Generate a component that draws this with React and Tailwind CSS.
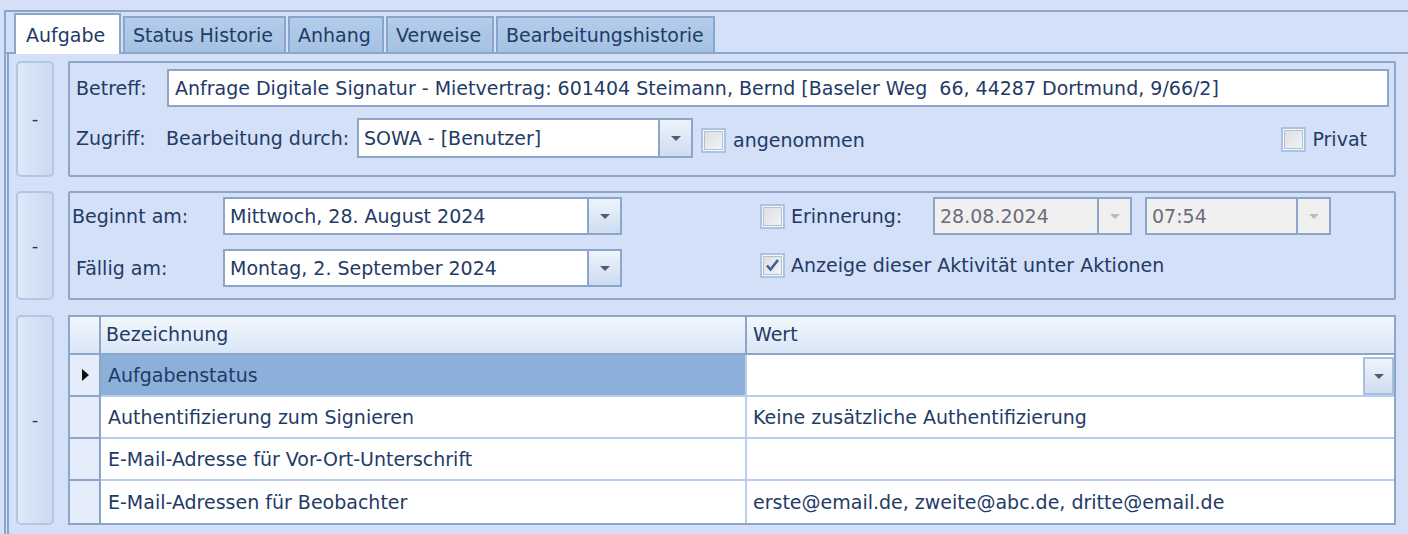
import { useState } from "react";

const line = "border-[#8ba6c9]";
const txt = "text-[#1f3b66]";

const Arrow = ({ disabled }) => (
    <svg width="12" height="7" viewBox="0 0 12 7">
        <path d="M1 1h10L6 6z" fill={disabled ? "#b4bcc8" : "#4f5e74"} />
    </svg>
);

const DropButton = ({ disabled }) => (
    <div
        className={`w-[33px] h-full flex items-center justify-center border-l-2 ${line} ${
            disabled ? "bg-[#f0f0f0]" : "bg-gradient-to-b from-[#eef4fc] to-[#cddcf0]"
        }`}
    >
        <Arrow disabled={disabled} />
    </div>
);

const Combo = ({ value, width, disabled, height = "h-[38px]" }) => (
    <div
        className={`${width} ${height} flex border-2 ${line} ${
            disabled ? "bg-[#f0f0f0] text-[#6d6d78]" : `bg-white ${txt}`
        }`}
    >
        <div className="flex-1 flex items-center pl-[5px] whitespace-nowrap overflow-hidden">{value}</div>
        <DropButton disabled={disabled} />
    </div>
);

const Check = ({ checked }) => (
    <div className="w-[25px] h-[25px] shrink-0 border-2 border-[#a9c3e3] flex items-center justify-center bg-[#f4f7fb]">
        <div className="w-[19px] h-[19px] border border-[#b8c0cc] bg-gradient-to-br from-[#dcdfe4] to-[#f2f3f5] flex items-center justify-center">
            {checked && (
                <svg width="15" height="15" viewBox="0 0 15 15">
                    <path d="M2 7.5l3.5 4L13 2" stroke="#3d6296" strokeWidth="2.6" fill="none" />
                </svg>
            )}
        </div>
    </div>
);

const Collapse = ({ height }) => (
    <button
        className={`w-[38px] ${height} shrink-0 rounded-[5px] border-2 border-[#b3c7e1] bg-gradient-to-r from-[#dde9f9] to-[#cbdaef] flex items-center justify-center ${txt} text-[18px] leading-none`}
    >
        -
    </button>
);

const tabs = ["Aufgabe", "Status Historie", "Anhang", "Verweise", "Bearbeitungshistorie"];
const tabWidths = ["w-[107px]", "w-[163px]", "w-[96px]", "w-[108px]", "w-[219px]"];

const rows = [
    ["Aufgabenstatus", ""],
    ["Authentifizierung zum Signieren", "Keine zusätzliche Authentifizierung"],
    ["E-Mail-Adresse für Vor-Ort-Unterschrift", ""],
    ["E-Mail-Adressen für Beobachter", "erste@email.de, zweite@abc.de, dritte@email.de"],
];

export default function App() {
    const [activeTab, setActiveTab] = useState(0);

    return (
        <div
            className={`w-[1408px] h-[534px] overflow-hidden bg-[#d4e0f7] pt-[10px] pl-[4px] text-[19px] ${txt}`}
            style={{ fontFamily: '"DejaVu Sans", Verdana, sans-serif' }}
        >
            <div className={`h-full border-l-2 border-t-2 ${line}`}>
                {/* Tabs */}
                <div className={`h-[42px] flex items-end gap-[2px] pl-[8px] border-b-2 ${line}`}>
                    {tabs.map((t, i) =>
                        i === activeTab ? (
                            <button
                                key={t}
                                onClick={() => setActiveTab(i)}
                                className={`${tabWidths[i]} h-[41px] -mb-[2px] relative bg-white border-t-2 border-l-2 border-r-2 ${line} text-left pl-[10px] pt-[2px]`}
                            >
                                {t}
                            </button>
                        ) : (
                            <button
                                key={t}
                                onClick={() => setActiveTab(i)}
                                className={`${tabWidths[i]} h-[36px] bg-gradient-to-b from-[#b3cdea] to-[#a5c1e2] border-2 border-b-0 border-[#88a6cb] text-left pl-[8px] pt-[1px] whitespace-nowrap`}
                            >
                                {t}
                            </button>
                        )
                    )}
                </div>

                {/* Page */}
                <div className={`ml-[1px] h-full border-l-2 ${line} pt-[7px] pl-[7px] flex flex-col gap-[14px]`}>
                    {/* Group 1 */}
                    <div className="flex gap-[14px]">
                        <Collapse height="h-[116px]" />
                        <div className={`w-[1328px] h-[116px] border-2 ${line} rounded-[2px] pt-[6px] pl-[6px] flex flex-col gap-[11px]`}>
                            <div className="flex items-center">
                                <span className="w-[91px] whitespace-nowrap">Betreff:</span>
                                <div className={`w-[1222px] h-[38px] bg-white border-2 ${line} flex items-center pl-[6px] whitespace-nowrap overflow-hidden`}>
                                    Anfrage Digitale Signatur - Mietvertrag: 601404 Steimann, Bernd [Baseler Weg&nbsp; 66, 44287 Dortmund, 9/66/2]
                                </div>
                            </div>
                            <div className="flex items-center">
                                <span className="w-[90px]">Zugriff:</span>
                                <span className="w-[191px] whitespace-nowrap">Bearbeitung durch:</span>
                                <Combo value="SOWA - [Benutzer]" width="w-[336px]" height="h-[40px]" />
                                <div className="ml-[8px] flex items-center gap-[7px] pt-[4px]">
                                    <Check />
                                    <span>angenommen</span>
                                </div>
                                <div className="ml-auto mr-[27px] flex items-center gap-[6px] pt-[2px]">
                                    <Check />
                                    <span>Privat</span>
                                </div>
                            </div>
                        </div>
                    </div>

                    {/* Group 2 */}
                    <div className="flex gap-[14px]">
                        <Collapse height="h-[109px]" />
                        <div className={`w-[1328px] h-[109px] border-2 ${line} rounded-[2px] pt-[4px] flex flex-col gap-[14px]`}>
                            <div className="flex items-center">
                                <span className="w-[153px] pl-[2px] whitespace-nowrap">Beginnt am:</span>
                                <Combo value="Mittwoch, 28. August 2024" width="w-[399px]" />
                                <div className="ml-[138px] flex items-center gap-[6px]">
                                    <Check />
                                    <span className="w-[142px]">Erinnerung:</span>
                                </div>
                                <Combo value="28.08.2024" width="w-[199px]" disabled />
                                <div className="w-[13px]" />
                                <Combo value="07:54" width="w-[186px]" disabled />
                            </div>
                            <div className="flex items-center">
                                <span className="w-[153px] pl-[6px] whitespace-nowrap">Fällig am:</span>
                                <Combo value="Montag, 2. September 2024" width="w-[399px]" />
                                <div className="ml-[138px] flex items-center gap-[6px] -mt-[6px]">
                                    <Check checked />
                                    <span>Anzeige dieser Aktivität unter Aktionen</span>
                                </div>
                            </div>
                        </div>
                    </div>

                    {/* Group 3 */}
                    <div className="flex gap-[14px] pt-[1px]">
                        <Collapse height="h-[210px]" />
                        <div className={`w-[1328px] h-[210px] border-2 ${line} bg-white grid grid-cols-[31px_646px_1fr] grid-rows-[38px_42px_42px_42px_42px]`}>
                            <div className={`bg-gradient-to-b from-[#f3f7fd] to-[#d9e6f6] border-b-2 border-r-2 ${line}`} />
                            <div className={`bg-gradient-to-b from-[#f3f7fd] to-[#d9e6f6] border-b-2 border-r-2 ${line} flex items-center pl-[5px] pb-[1px]`}>
                                Bezeichnung
                            </div>
                            <div className={`bg-gradient-to-b from-[#f3f7fd] to-[#d9e6f6] border-b-2 ${line} flex items-center pl-[6px] pb-[1px]`}>
                                Wert
                            </div>
                            {rows.map(([name, value], i) => (
                                <div key={name} className="contents">
                                    <div className={`bg-[#e4edf9] border-r-2 ${line} ${i < 3 ? "border-b-2" : ""} flex items-center justify-center`}>
                                        {i === 0 && (
                                            <svg width="8" height="12" viewBox="0 0 8 12">
                                                <path d="M1 0l7 6-7 6z" fill="#111" />
                                            </svg>
                                        )}
                                    </div>
                                    <div
                                        className={`${i === 0 ? "bg-[#8db0da]" : "bg-white"} border-r-2 border-[#b7cfec] ${
                                            i < 3 ? "border-b-2" : ""
                                        } flex items-center pl-[7px] whitespace-nowrap`}
                                    >
                                        {name}
                                    </div>
                                    <div className={`bg-white border-[#b7cfec] ${i < 3 ? "border-b-2" : ""} flex items-center pl-[6px] whitespace-nowrap`}>
                                        <span className="flex-1">{value}</span>
                                        {i === 0 && (
                                            <div className="w-[31px] h-[38px] border-2 border-[#a7bfdd] bg-gradient-to-b from-[#eef4fc] to-[#cddcf0] flex items-center justify-center mt-[2px]">
                                                <Arrow />
                                            </div>
                                        )}
                                    </div>
                                </div>
                            ))}
                        </div>
                    </div>
                </div>
            </div>
        </div>
    );
}
